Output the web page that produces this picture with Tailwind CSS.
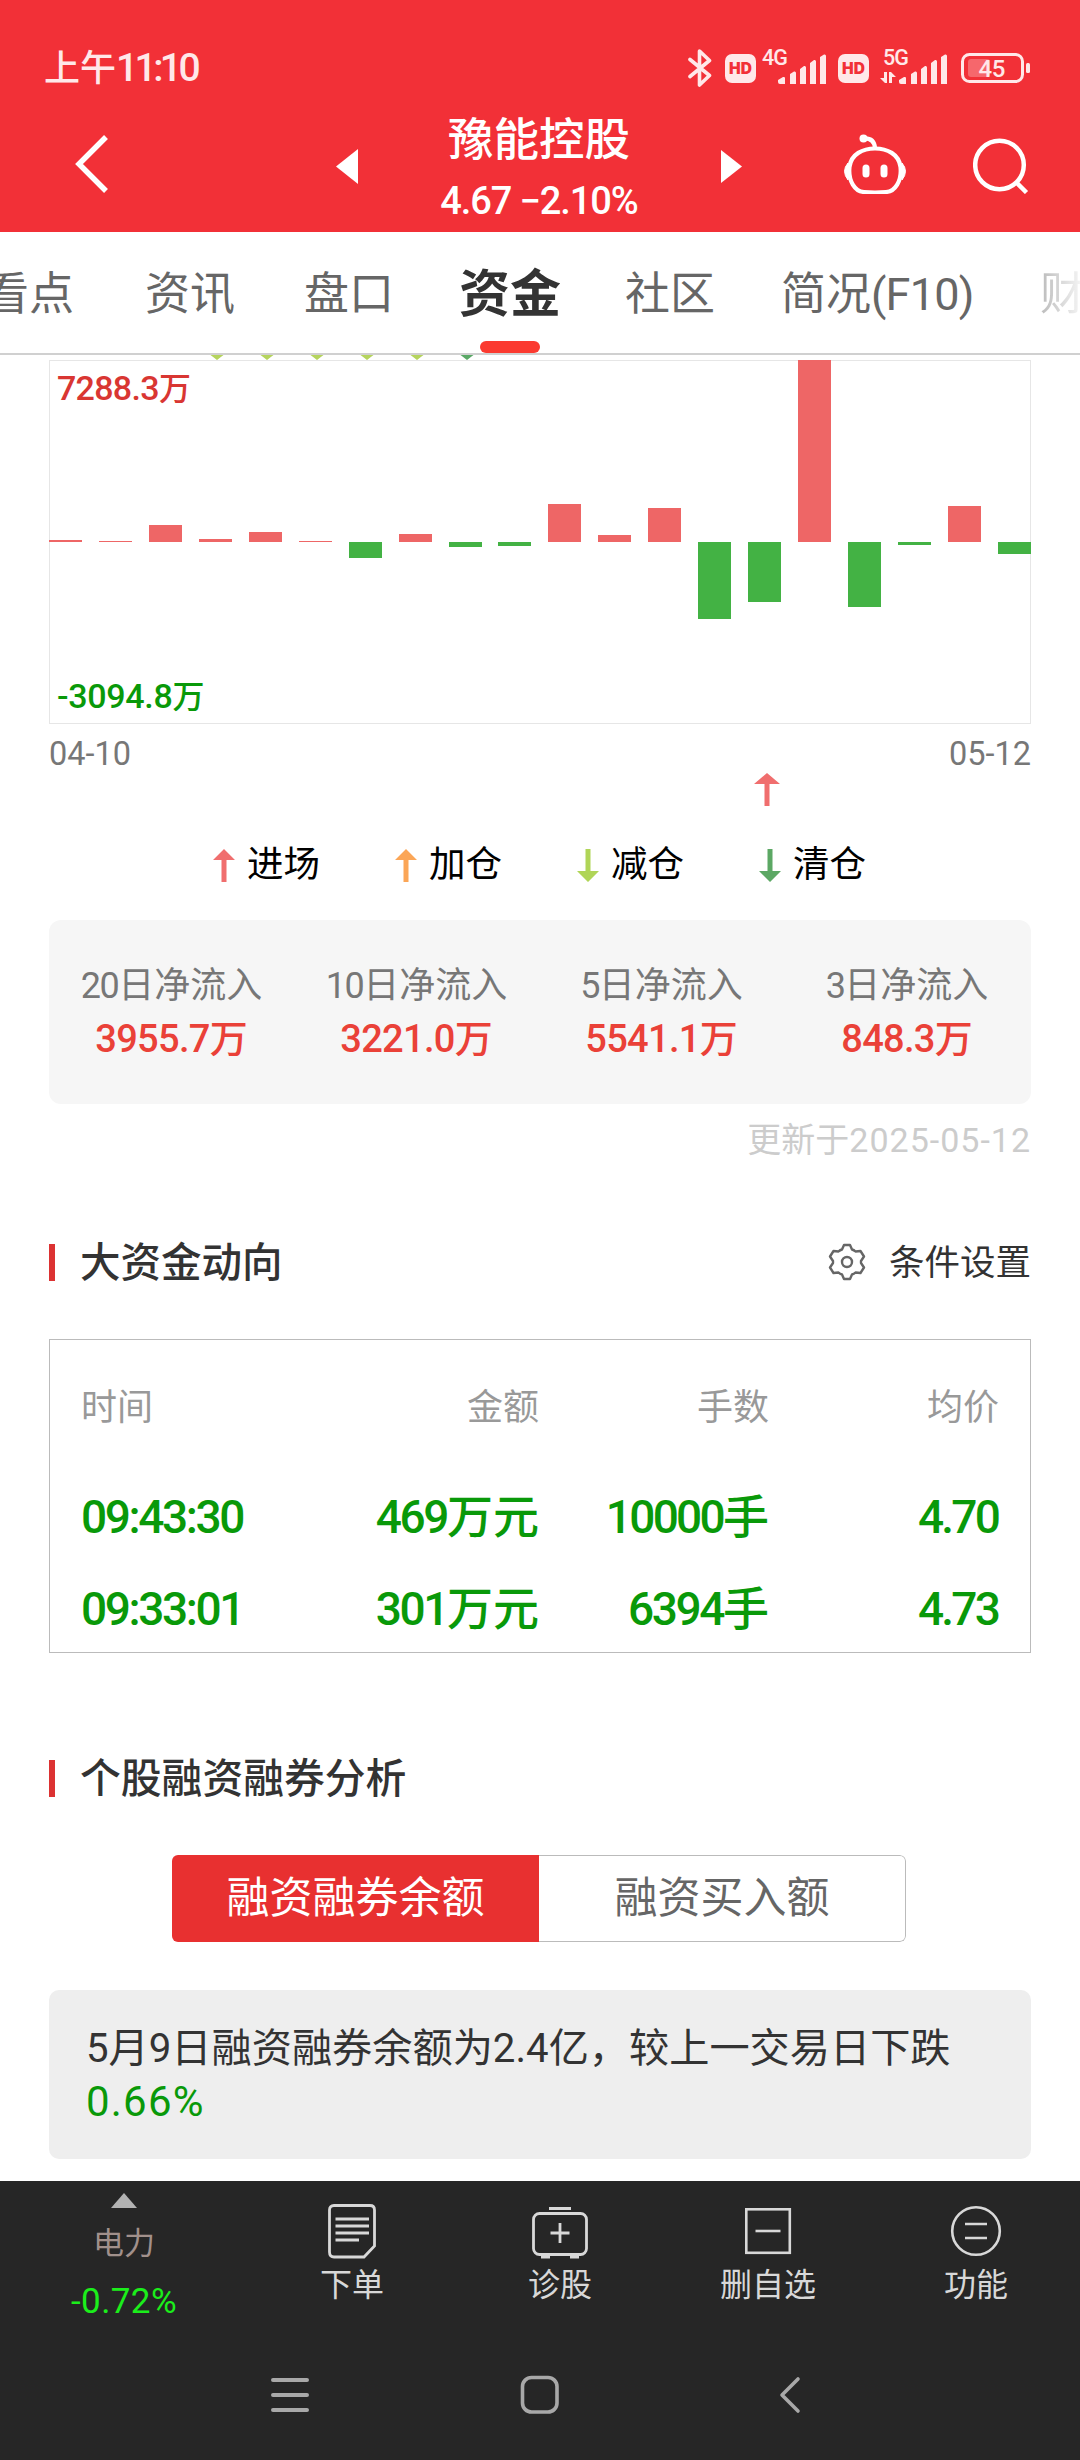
<!DOCTYPE html>
<html lang="zh-CN">
<head>
  <meta charset="UTF-8" />
  <title>豫能控股 - 资金</title>
  <meta name="viewport" content="width=device-width, initial-scale=1.0" />
  <script src="https://cdn.jsdelivr.net/npm/@tailwindcss/browser@4"></script>
  <style>
    body {
      font-family: Roboto, 'Noto Sans CJK SC', sans-serif;
    }
  </style>
</head>
<body class="bg-white w-[1080px] h-[2460px] overflow-hidden flex flex-col text-[#333]">

  <!-- Header -->
  <header class="bg-[#f23037] text-white h-[232px] shrink-0">
    <div class="h-[100px] pt-[36px] pl-[44px] pr-[50px] flex items-center justify-between text-[#ffe8e9]">
      <div class="pt-px text-[36px] leading-none font-medium">上午<span class="text-[39px] tracking-[-3.6px]">11:10</span></div>
      <div class="flex items-center">
        <svg class="w-6 h-[38px]" viewBox="0 0 24 38" fill="none" stroke="currentColor" stroke-width="3.6" stroke-linejoin="round" stroke-linecap="round"><path d="M2 10.500 L21.500 26.500 L11.500 36 V2 L21.500 11.500 L2 27.500" /></svg>
        <svg class="w-[31px] h-[38px] ml-[13px]" viewBox="0 0 31 38"><rect x="0" y="5" width="31" height="29" rx="7" fill="currentColor" /><text x="15.500" y="25" text-anchor="middle" font-family="Inter" font-size="15.500" font-weight="900" textLength="23" fill="#f23037">HD</text></svg>
        <svg class="w-16 h-[38px] ml-[6px] overflow-visible" viewBox="0 0 64 38" fill="currentColor"><text x="0" y="15.500" font-size="21.500" font-weight="500" textLength="26">4G</text><path d="M16 31 L21 28 Q23 27.500 23 29 V35 H18 Q16 35 16 33z M28 25 L32 22.500 Q34 22 34 24 V35 H28z M38 20 L42 17 Q44 16.500 44 18.500 V35 H38z M48 14 L52 11 Q54 10.500 54 12.500 V35 H48z M58 8 L62 5.500 Q64 5 64 7 V35 H58z" /></svg>
        <svg class="w-[31px] h-[38px] ml-3" viewBox="0 0 31 38"><rect x="0" y="5" width="31" height="29" rx="7" fill="currentColor" /><text x="15.500" y="25" text-anchor="middle" font-family="Inter" font-size="15.500" font-weight="900" textLength="23" fill="#f23037">HD</text></svg>
        <svg class="w-[67px] h-[38px] ml-[11px] overflow-visible" viewBox="0 0 67 38" fill="currentColor"><text x="3" y="15.500" font-size="21.500" font-weight="500" textLength="26">5G</text><path d="M0 29 H4 V23 H7 V34 H5z M9 34 V23 H11 L16 28 H12 V34z M19 31 L24 28 Q26 27.500 26 29 V35 H21 Q19 35 19 33z M31 25 L35 22.500 Q37 22 37 24 V35 H31z M41 20 L45 17 Q47 16.500 47 18.500 V35 H41z M51 14 L55 11 Q57 10.500 57 12.500 V35 H51z M61 8 L65 5.500 Q67 5 67 7 V35 H61z" /></svg>
        <svg class="w-[69px] h-[38px] ml-[14px]" viewBox="0 0 69 38" fill="currentColor"><rect x="1.500" y="5.500" width="60" height="27" rx="7" fill="none" stroke="currentColor" stroke-width="3" /><rect x="7" y="10" width="22" height="18" rx="3" opacity=".3" /><rect x="65" y="14" width="4" height="10" rx="1.500" /><text x="31" y="27.500" text-anchor="middle" font-size="24" font-weight="500" textLength="27">45</text></svg>
      </div>
    </div>

    <div class="h-[132px] pl-[75px] flex items-center">
      <svg class="w-[33px] h-[58px] mb-1" viewBox="0 0 33 58" fill="none" stroke="currentColor" stroke-width="5.500"><path d="M31 2 L4 29 L31 56" /></svg>
      <svg class="w-[22px] h-[35px] ml-[228px]" viewBox="0 0 22 35" fill="currentColor"><path d="M22 0 V35 L0 17.500z" /></svg>
      <div class="w-[362px] mr-px text-center font-medium flex flex-col gap-[4px] mt-[5px]">
        <div class="text-[45.500px] leading-[60px]">豫能控股</div>
        <div class="text-[38px] leading-[52px] tracking-[-1.1px]">4.67 −2.10%</div>
      </div>
      <svg class="w-[21px] h-[33px]" viewBox="0 0 21 33" fill="currentColor"><path d="M0 0 V33 L21 16.500z" /></svg>
      <svg class="w-16 h-[60px] ml-[101px] mb-[4px]" viewBox="0 0 64 60" fill="none" stroke="currentColor" stroke-width="4.200"><path d="M32 14.500 C44 14.500 56 20 57.500 33 C59 47 52 57.500 43 58 Q32 59 21 58 C12 57.500 5 47 6.500 33 C8 20 20 14.500 32 14.500z" /><path d="M20.500 4.500 C28 4 31.500 8 32 14" /><circle cx="20.500" cy="4.500" r="4" fill="currentColor" stroke="none" /><path d="M5 29 Q-2 37 5 46z M59 29 Q66 37 59 46z" fill="currentColor" stroke-width="1" /><path d="M23 34 V40 M41 34 V40" stroke-width="7" stroke-linecap="round" /></svg>
      <svg class="w-[56px] h-[56px] ml-[66px]" viewBox="0 0 56 56" fill="none" stroke="currentColor" stroke-width="4.500"><circle cx="26.500" cy="27" r="24.300" /><path d="M43 44 L53.500 54.500" /></svg>
    </div>
  </header>

  <!-- Tabs -->
  <nav class="relative h-[123px] shrink-0 -ml-4 w-[1096px] pt-[5px] border-b-2 border-[#d0d0d0] grid grid-cols-[161px_159px_155px_166px_156px_259px_60px] items-center text-[45px] text-[#666] whitespace-nowrap overflow-hidden">
    <span>看点</span>
    <span>资讯</span>
    <span>盘口</span>
    <span class="text-[51px] font-bold text-[#333]">资金</span>
    <span>社区</span>
    <span>简况<span class="tracking-[-0.8px]">(F10)</span></span>
    <span class="bg-linear-to-r from-[#bbb] to-white to-80% bg-clip-text text-transparent">财</span>
    <i class="absolute left-[496px] bottom-0 w-[60px] h-3 rounded-full bg-[#fb3a30]"></i>
  </nav>

  <main class="h-[1826px] shrink-0 px-[49px] overflow-hidden flex flex-col">

    <!-- Fund flow chart -->
    <svg class="w-[982px] h-[5px] shrink-0" viewBox="0 0 982 5" fill="#b5d45e"><path d="M161.500 0 h13 l-6.500 5z M211.500 0 h13 l-6.500 5z M261.500 0 h13 l-6.500 5z M311.500 0 h13 l-6.500 5z M361.500 0 h13 l-6.500 5z" /><path d="M411.500 0 h13 l-6.500 5z" fill="#5aa866" /></svg>
    <div class="relative h-[364px] shrink-0 border border-[#e6e6e6]">
      <div id="bars" class="absolute -inset-x-px -top-px h-[364px] flex justify-between"></div>
      <div class="relative h-full px-[7px] pt-[4px] pb-[3px] flex flex-col justify-between text-[34px] leading-[46px] tracking-[-0.7px] font-medium">
        <span class="text-[#d93632]">7288.3<span class="text-[32px]">万</span></span>
        <span class="text-[#099909] tracking-[-0.3px]">-3094.8<span class="text-[32px]">万</span></span>
      </div>
    </div>
    <div class="flex justify-between h-[60px] shrink-0 items-center text-[32.500px] text-[#777]">
      <span>04-10</span>
      <span>05-12</span>
    </div>
    <svg class="w-[26px] h-[33px] shrink-0 ml-[705px] mt-[-11px]" viewBox="0 0 26 33" fill="#f06e6e"><path d="M13 0 L26 11 H15.500 V33 H10.500 V11 H0z" /></svg>

    <div class="mt-[33px] h-[52px] shrink-0 grid grid-cols-[182px_182px_182px_182px] pl-[164px] text-[36.500px] leading-[52px] text-black">
      <div class="flex items-center gap-[12px]"><svg class="w-[22px] h-[33px]" viewBox="0 0 22 33" fill="#f06e6e"><path d="M11 0 L22 11 H13.500 V33 H8.500 V11 H0z" /></svg>进场</div>
      <div class="flex items-center gap-[12px]"><svg class="w-[22px] h-[33px]" viewBox="0 0 22 33" fill="#fba657"><path d="M11 0 L22 11 H13.500 V33 H8.500 V11 H0z" /></svg>加仓</div>
      <div class="flex items-center gap-[12px]"><svg class="w-[22px] h-[33px]" viewBox="0 0 22 33" fill="#b0d557"><path d="M11 33 L22 22 H13.500 V0 H8.500 V22 H0z" /></svg>减仓</div>
      <div class="flex items-center gap-[12px]"><svg class="w-[22px] h-[33px]" viewBox="0 0 22 33" fill="#5ca864"><path d="M11 33 L22 22 H13.500 V0 H8.500 V22 H0z" /></svg>清仓</div>
    </div>

    <div class="mt-[29px] h-[184px] shrink-0 bg-[#f6f6f6] rounded-xl grid grid-cols-[245px_245px_245px_246px] content-center text-center">
      <div>
        <div class="pt-[2px] text-[36px] leading-[53px] text-[#777]"><span class="tracking-[-1.6px]">20</span>日净流入</div>
        <div class="text-[38px] leading-[53px] font-medium text-[#ea4138]"><span class="tracking-[-0.7px]">3955.7</span>万</div>
      </div>
      <div>
        <div class="pt-[2px] text-[36px] leading-[53px] text-[#777]"><span class="tracking-[-1.6px]">10</span>日净流入</div>
        <div class="text-[38px] leading-[53px] font-medium text-[#ea4138]"><span class="tracking-[-0.7px]">3221.0</span>万</div>
      </div>
      <div>
        <div class="pt-[2px] text-[36px] leading-[53px] text-[#777]"><span class="tracking-[-1.6px]">5</span>日净流入</div>
        <div class="text-[38px] leading-[53px] font-medium text-[#ea4138]"><span class="tracking-[-0.7px]">5541.1</span>万</div>
      </div>
      <div>
        <div class="pt-[2px] text-[36px] leading-[53px] text-[#777]"><span class="tracking-[-1.6px]">3</span>日净流入</div>
        <div class="text-[38px] leading-[53px] font-medium text-[#ea4138]"><span class="tracking-[-0.7px]">848.3</span>万</div>
      </div>
    </div>
    <div class="mt-[11px] h-[50px] shrink-0 text-right text-[34px] leading-[50px] text-[#ccc]">更新于<span class="tracking-[1px]">2025-05-12</span></div>

    <!-- Big fund moves -->
    <div class="mt-[67px] h-[60px] shrink-0 flex items-center">
      <i class="w-[6px] h-[37px] bg-[#dc3232]"></i>
      <h2 class="ml-[25px] pt-[2px] text-[40.500px] font-medium">大资金动向</h2>
      <svg class="w-[38px] h-[38px] ml-auto mr-[23px]" viewBox="0 0 38 38" fill="none" stroke="#666" stroke-width="2.400" stroke-linejoin="round"><path d="M16 2 H22 L24 6.500 Q26 7 27.500 8.500 L32.500 8 L36 13.500 L33 18 V20 L36 24.500 L32.500 30 L27.500 29.500 Q26 31 24 31.500 L22 36 H16 L14 31.500 Q12 31 10.500 29.500 L5.500 30 L2 24.500 L5 20 V18 L2 13.500 L5.500 8 L10.500 8.500 Q12 7 14 6.500z" /><circle cx="19" cy="19" r="5" /></svg>
      <span class="pt-[3px] text-[35.500px]">条件设置</span>
    </div>
    <div class="mt-[47px] h-[314px] shrink-0 border border-[#bbb] px-[31px] pt-[34px]">
      <div class="grid grid-cols-[190px_268px_230px_230px] text-right text-[36px] leading-[68px] text-[#999]">
        <span class="text-left">时间</span><span>金额</span><span>手数</span><span>均价</span>
      </div>
      <div class="mt-[29px] grid grid-cols-[190px_268px_230px_229px] text-right text-[46px] leading-[92px] font-medium text-[#099909]">
        <span class="text-left tracking-[-2.4px]">09:43:30</span>
        <span><span class="tracking-[-2.4px]">469</span>万元</span>
        <span><span class="tracking-[-2.7px]">10000</span>手</span>
        <span class="tracking-[-2.8px]">4.70</span>
        <span class="text-left tracking-[-2.4px]">09:33:01</span>
        <span><span class="tracking-[-2.4px]">301</span>万元</span>
        <span><span class="tracking-[-2.4px]">6394</span>手</span>
        <span class="tracking-[-2.8px]">4.73</span>
      </div>
    </div>

    <!-- Margin trading -->
    <div class="mt-[95px] h-[60px] shrink-0 flex items-center">
      <i class="w-[6px] h-[37px] bg-[#dc3232]"></i>
      <h2 class="ml-[25px] pt-[3px] text-[40.800px] font-medium">个股融资融券分析</h2>
    </div>
    <div class="mt-[47px] ml-[123px] w-[734px] h-[87px] shrink-0 grid grid-cols-2 grid-rows-[87px] rounded-md overflow-hidden text-center text-[43px] leading-[87px]">
      <div class="bg-[#e83030] text-white">融资融券余额</div>
      <div class="border border-l-0 border-[#bbb] rounded-r-md text-[#666] leading-[85px]">融资买入额</div>
    </div>
    <div class="mt-[48px] h-[169px] shrink-0 rounded-[10px] bg-[#eee] px-[37px] pt-[32px] text-[40.200px] leading-[53px] whitespace-nowrap">
      <p>5月9日融资融券余额为2.4亿，较上一交易日下跌</p>
      <p class="text-[#099909] text-[42px] tracking-[1.2px]">0.66%</p>
    </div>
  </main>

  <!-- Bottom bar -->
  <footer class="grow bg-[#262626] text-[#d8d8d8]">
    <div class="h-[148px] grid grid-cols-[248px_208px_208px_208px_208px] text-center text-[32px] leading-[44px]">
      <div class="flex flex-col items-center pt-3">
        <svg class="w-[26px] h-[15px]" viewBox="0 0 26 15" fill="#b2b2b2"><path d="M13 0 L26 15 H0z" /></svg>
        <span class="mt-[14px] text-[31px] text-[#a1908b]">电力</span>
        <span class="mt-[14px] text-[35px] tracking-[0.4px] text-[#1bee1b]">-0.72%</span>
      </div>
      <div class="flex flex-col items-center pt-[22px]">
        <svg class="w-[50px] h-[56px]" viewBox="0 0 50 56" fill="none" stroke="currentColor" stroke-width="2.800"><path d="M7 2.500 H43 Q47.500 2.500 47.500 7 V43 L37 54 H7 Q2.500 54 2.500 49 V7 Q2.500 2.500 7 2.500z M8.500 16 H42 M8.500 23 H42 M8.500 30 H42 M8.500 37 H32" /></svg>
        <span class="mt-[4px]">下单</span>
      </div>
      <div class="flex flex-col items-center pt-[22px]">
        <svg class="w-[58px] h-[56px]" viewBox="0 0 58 56" fill="none" stroke="currentColor" stroke-width="2.800"><rect x="2.500" y="10.500" width="53" height="41" rx="6" /><path d="M18 5.500 H40 M29 20 V40 M19.500 30 H38.500" /><path d="M10 53.500 H19 M39 53.500 H48" stroke-width="4" /></svg>
        <span class="mt-[4px]">诊股</span>
      </div>
      <div class="flex flex-col items-center pt-[22px]">
        <svg class="w-[50px] h-[56px]" viewBox="0 0 50 56" fill="none" stroke="currentColor" stroke-width="2.600"><rect x="3.300" y="6.300" width="43.500" height="43.500" /><path d="M12.500 28 H37.500" /></svg>
        <span class="mt-[4px]">删自选</span>
      </div>
      <div class="flex flex-col items-center pt-[22px]">
        <svg class="w-[52px] h-[56px]" viewBox="0 0 52 56" fill="none" stroke="currentColor" stroke-width="2.600"><circle cx="26" cy="28" r="23.800" /><path d="M15 21 H37 M15 35 H37" /></svg>
        <span class="mt-[4px]">功能</span>
      </div>
    </div>
    <div class="h-[132px] pl-[270px] flex items-center text-[#a8a8a8]">
      <svg class="w-[40px] h-[40px]" viewBox="0 0 40 40" fill="none" stroke="currentColor" stroke-width="4" stroke-linecap="round"><path d="M3 5 H37 M3 20 H37 M3 35 H37" /></svg>
      <svg class="w-[40px] h-[40px] ml-[210px]" viewBox="0 0 40 40" fill="none" stroke="currentColor" stroke-width="3.600"><rect x="2.500" y="2.500" width="34.500" height="34.500" rx="9" /></svg>
      <svg class="w-[22px] h-[40px] ml-[219px]" viewBox="0 0 22 40" fill="none" stroke="currentColor" stroke-width="3.600" stroke-linecap="round" stroke-linejoin="round"><path d="M19 4 L3 20 L19 36" /></svg>
    </div>
  </footer>

  <script>
    // bar heights in px, negative = net outflow
    const flows = [2.5, 1.5, 17, 3.5, 10.5, 1.5, -16, 8, -5, -4, 38, 7, 34.5, -77, -60, 182, -65, -3, 36, -12];
    const bars = document.getElementById('bars');

    flows.forEach((v) => {
      const bar = document.createElement('div');
      bar.className = v > 0 ? 'w-[33px] bg-[#ee6666]' : 'w-[33px] bg-[#43b244]';
      bar.style.height = Math.abs(v) + 'px';
      bar.style.marginTop = (v > 0 ? 182 - v : 182) + 'px';
      bars.appendChild(bar);
    });
  </script>
</body>
</html>
